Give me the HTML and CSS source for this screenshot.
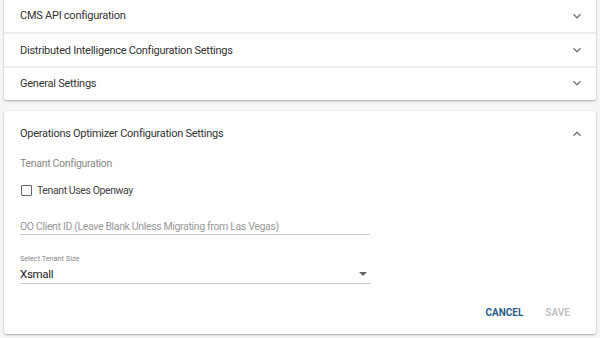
FILE: index.html
```html
<!DOCTYPE html>
<html>
<head>
<meta charset="utf-8">
<link rel="stylesheet" href="styles.css">
</head>
<body>
<div class="page">
  <div class="card panels">
    <div class="panel-row"><span>CMS API configuration</span><svg class="chev" viewBox="0 0 24 24"><path d="M7.41 8.59L12 13.17l4.59-4.58L18 10l-6 6-6-6 1.41-1.41z"/></svg></div>
    <div class="panel-row"><span>Distributed Intelligence Configuration Settings</span><svg class="chev" viewBox="0 0 24 24"><path d="M7.41 8.59L12 13.17l4.59-4.58L18 10l-6 6-6-6 1.41-1.41z"/></svg></div>
    <div class="panel-row"><span>General Settings</span><svg class="chev" viewBox="0 0 24 24"><path d="M7.41 8.59L12 13.17l4.59-4.58L18 10l-6 6-6-6 1.41-1.41z"/></svg></div>
  </div>
  <div class="card open">
    <div class="open-head"><span>Operations Optimizer Configuration Settings</span><svg class="chev" viewBox="0 0 24 24"><path d="M7.41 15.41L12 10.83l4.59 4.58L18 14l-6-6-6 6z"/></svg></div>
    <div class="body">
      <div class="subtitle">Tenant Configuration</div>
      <label class="check"><span class="box"></span><span>Tenant Uses Openway</span></label>
      <div class="field"><span class="placeholder">OO Client ID (Leave Blank Unless Migrating from Las Vegas)</span></div>
      <div class="select">
        <div class="select-label">Select Tenant Size</div>
        <div class="select-value"><span>Xsmall</span><span class="caret"></span></div>
      </div>
      <div class="actions"><span class="btn primary">CANCEL</span><span class="btn disabled">SAVE</span></div>
    </div>
  </div>
</div>
</body>
</html>
```
FILE: styles.css
```css
html, body { margin: 0; padding: 0; }
* { box-sizing: border-box; }
body {
  background: #f6f6f6;
  font-family: Roboto, "Noto Sans", sans-serif;
  color: #333;
  width: 600px;
  height: 338px;
  overflow: hidden;
}
.page { padding: 0 4px; margin-top: -4px; }
.card {
  background: #fff;
  border-radius: 2px;
  box-shadow: 0 1px 3px rgba(0,0,0,0.22), 0 1px 1px rgba(0,0,0,0.12);
}
.panel-row {
  height: 34px;
  display: flex;
  align-items: center;
  justify-content: space-between;
  padding: 0 11px 0 16px;
  font-size: 11px;
  letter-spacing: -0.25px;
  border-top: 2px solid #ececec;
}
.panel-row:first-child { border-top: none; height: 36px; padding-top: 3px; }
.panel-row:last-child { padding-bottom: 2px; }
.chev { width: 16px; height: 16px; fill: #777; }
.open { margin-top: 11px; height: 223px; }
.open-head {
  height: 45px;
  display: flex;
  align-items: center;
  justify-content: space-between;
  padding: 0 11px 0 16px;
  font-size: 11px;
  letter-spacing: -0.28px;
}
.body { padding: 0 16px; }
.subtitle { font-size: 10.5px; letter-spacing: -0.3px; color: #888; height: 16px; line-height: 16px; }
.check { display: flex; align-items: center; margin-top: 11px; font-size: 10.5px; letter-spacing: -0.4px; color: #444; height: 14px; }
.box { width: 11px; height: 11px; border: 1.5px solid #666; border-radius: 1px; margin: 0 5px 0 1px; }
.field { width: 350px; border-bottom: 1px solid #c8c8c8; margin-top: 20px; height: 18px; line-height: 16px; }
.placeholder { font-size: 10.5px; letter-spacing: -0.35px; color: #999; }
.select { width: 350px; margin-top: 19px; }
.select-label { font-size: 7.3px; color: #888; line-height: 10px; }
.select-value { display: flex; justify-content: space-between; align-items: center; font-size: 11.5px; letter-spacing: -0.3px; color: #222; height: 20px; border-bottom: 1px solid #c8c8c8; }
.caret { width: 0; height: 0; border-left: 4px solid transparent; border-right: 4px solid transparent; border-top: 4px solid #666; margin-right: 3px; }
.actions { display: flex; justify-content: flex-end; gap: 22px; margin-top: 23px; padding-right: 10px; font-size: 10px; font-weight: 700; }
.btn.primary { color: #2a5f86; }
.btn.disabled { color: #c4c4c4; }
```
